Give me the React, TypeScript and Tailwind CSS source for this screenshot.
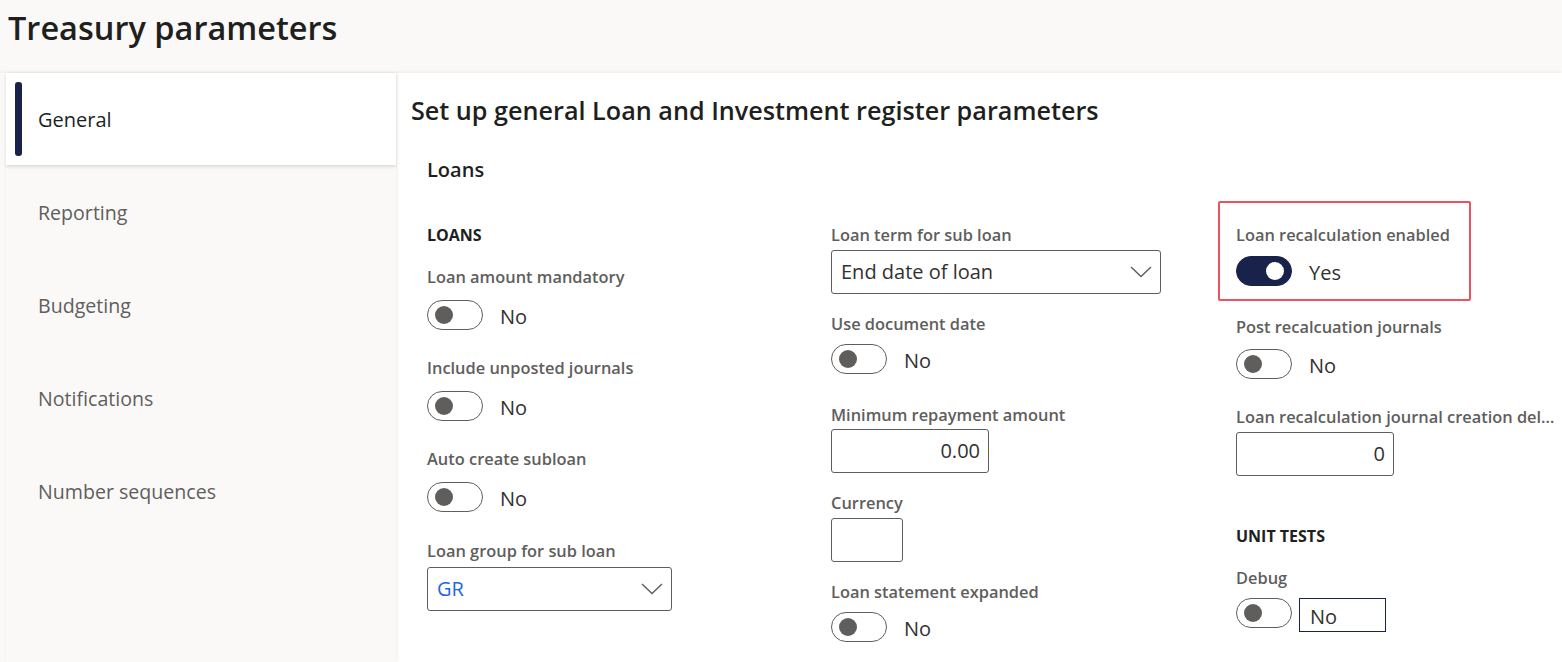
import { ReactNode } from "react";

const FONT = { fontFamily: '"Open Sans", "Noto Sans", sans-serif' };

const NAV = ["General", "Reporting", "Budgeting", "Notifications", "Number sequences"];

function Label({ children, className = "" }: { children: ReactNode; className?: string }) {
  return (
    <div className={`h-[22px] text-[16.4px] leading-[22px] font-semibold text-[#605e5c] whitespace-nowrap ${className}`}>
      {children}
    </div>
  );
}

function Heading({ children, className = "" }: { children: ReactNode; className?: string }) {
  return (
    <div className={`h-[22px] text-[16px] leading-[22px] font-bold text-[#201f1e] uppercase ${className}`}>
      {children}
    </div>
  );
}

function Toggle({ on = false }: { on?: boolean }) {
  return (
    <div
      className={`relative w-[56px] h-[30px] rounded-full shrink-0 ${
        on ? "bg-[#19224a] border border-[#19224a]" : "bg-white border border-[#605e5c]"
      }`}
    >
      <div
        className={`absolute top-[5px] w-[18px] h-[18px] rounded-full ${
          on ? "right-[7px] bg-white" : "left-[7px] bg-[#605e5c]"
        }`}
      />
    </div>
  );
}

function ToggleField({ value, on = false, className = "" }: { value: string; on?: boolean; className?: string }) {
  return (
    <div className={`flex items-center h-[30px] ${className}`}>
      <Toggle on={on} />
      <span className="relative top-[2px] ml-[17px] text-[20px] leading-[30px] text-[#323130]">{value}</span>
    </div>
  );
}

function Chevron() {
  return (
    <svg width="22" height="12" viewBox="0 0 22 12" fill="none">
      <polyline points="1,1 11,10.5 21,1" stroke="#605e5c" strokeWidth="1.4" />
    </svg>
  );
}

function Select({ value, width, blue = false, className = "" }: { value: string; width: string; blue?: boolean; className?: string }) {
  return (
    <div
      className={`h-[44px] ${width} border border-[#605e5c] rounded-[3px] flex items-center justify-between pl-[9px] pr-[8px] ${className}`}
    >
      <span className={`text-[20px] ${blue ? "text-[#2266e3]" : "text-[#323130]"}`}>{value}</span>
      <Chevron />
    </div>
  );
}

function Input({ value = "", width, className = "" }: { value?: string; width: string; className?: string }) {
  return (
    <div
      className={`h-[44px] ${width} border border-[#605e5c] rounded-[3px] flex items-center justify-end pr-[8px] text-[20px] text-[#323130] ${className}`}
    >
      {value}
    </div>
  );
}

export default function App() {
  return (
    <div className="w-full h-[662px] bg-[#faf9f8] overflow-hidden flex flex-col" style={FONT}>
      <div className="h-[73px] shrink-0 pl-[8px] pt-[6px]">
        <h1 className="text-[32.5px] leading-[44px] font-semibold text-[#201f1e]">Treasury parameters</h1>
      </div>

      <div className="flex flex-1 min-h-0 shadow-[0_-1px_3px_rgba(0,0,0,0.06)]">
        {/* left nav */}
        <div className="w-[390px] ml-[6px] shrink-0 shadow-[1px_0_3px_rgba(0,0,0,0.08)] z-10">
          {NAV.map((item, i) =>
            i === 0 ? (
              <div key={item} className="relative h-[92px] bg-white flex items-center pl-[32px] shadow-[0_2px_3px_rgba(0,0,0,0.12)]">
                <div className="absolute left-[9px] top-[9px] bottom-[9px] w-[7px] rounded-[3px] bg-[#19224a]" />
                <span className="relative top-[1px] text-[20px] text-[#201f1e]">{item}</span>
              </div>
            ) : (
              <div key={item} className="h-[93px] flex items-center pl-[32px]">
                <span className="relative top-[1px] text-[19.6px] text-[#605e5c]">{item}</span>
              </div>
            )
          )}
        </div>

        {/* main */}
        <div className="flex-1 bg-white pl-[15px] pt-[21px]">
          <div className="text-[25.2px] leading-[32px] font-semibold text-[#201f1e] whitespace-nowrap">
            Set up general Loan and Investment register parameters
          </div>
          <div className="ml-[16px] mt-[30px] text-[20px] leading-[28px] font-semibold text-[#201f1e]">Loans</div>

          <div className="ml-[16px] mt-[40px] flex">
            {/* column 1 */}
            <div className="w-[404px] shrink-0 flex flex-col">
              <Heading>Loans</Heading>
              <Label className="mt-[20px]">Loan amount mandatory</Label>
              <ToggleField value="No" className="mt-[12px]" />
              <Label className="mt-[27px]">Include unposted journals</Label>
              <ToggleField value="No" className="mt-[12px]" />
              <Label className="mt-[27px]">Auto create subloan</Label>
              <ToggleField value="No" className="mt-[12px]" />
              <Label className="mt-[28px]">Loan group for sub loan</Label>
              <Select value="GR" blue width="w-[245px]" className="mt-[5px]" />
            </div>

            {/* column 2 */}
            <div className="w-[405px] shrink-0 flex flex-col">
              <Label>Loan term for sub loan</Label>
              <Select value="End date of loan" width="w-[330px]" className="mt-[4px]" />
              <Label className="mt-[19px]">Use document date</Label>
              <ToggleField value="No" className="mt-[9px]" />
              <Label className="mt-[30px]">Minimum repayment amount</Label>
              <Input value="0.00" width="w-[158px]" className="mt-[3px]" />
              <Label className="mt-[19px]">Currency</Label>
              <Input width="w-[72px]" className="mt-[4px]" />
              <Label className="mt-[19px]">Loan statement expanded</Label>
              <ToggleField value="No" className="mt-[9px]" />
            </div>

            {/* column 3 */}
            <div className="w-[322px] shrink-0 flex flex-col">
              <div className="relative">
                <div className="absolute left-[-18px] top-[-23px] w-[253px] h-[100px] border-2 border-[#e8414e] rounded-[2px] opacity-90" />
                <Label>Loan recalculation enabled</Label>
                <ToggleField value="Yes" on className="mt-[10px]" />
              </div>
              <Label className="mt-[30px]">Post recalcuation journals</Label>
              <ToggleField value="No" className="mt-[11px]" />
              <Label className="mt-[27px] overflow-hidden text-ellipsis">Loan recalculation journal creation delay</Label>
              <Input value="0" width="w-[158px]" className="mt-[4px]" />
              <Heading className="mt-[49px]">Unit tests</Heading>
              <Label className="mt-[20px]">Debug</Label>
              <div className="flex items-start mt-[9px]">
                <Toggle />
                <div className="ml-[7px] w-[87px] h-[34px] border border-[#19224a] flex items-center pl-[10px] pt-[3px] text-[20px] text-[#323130]">
                  No
                </div>
              </div>
            </div>
          </div>
        </div>
      </div>
    </div>
  );
}
